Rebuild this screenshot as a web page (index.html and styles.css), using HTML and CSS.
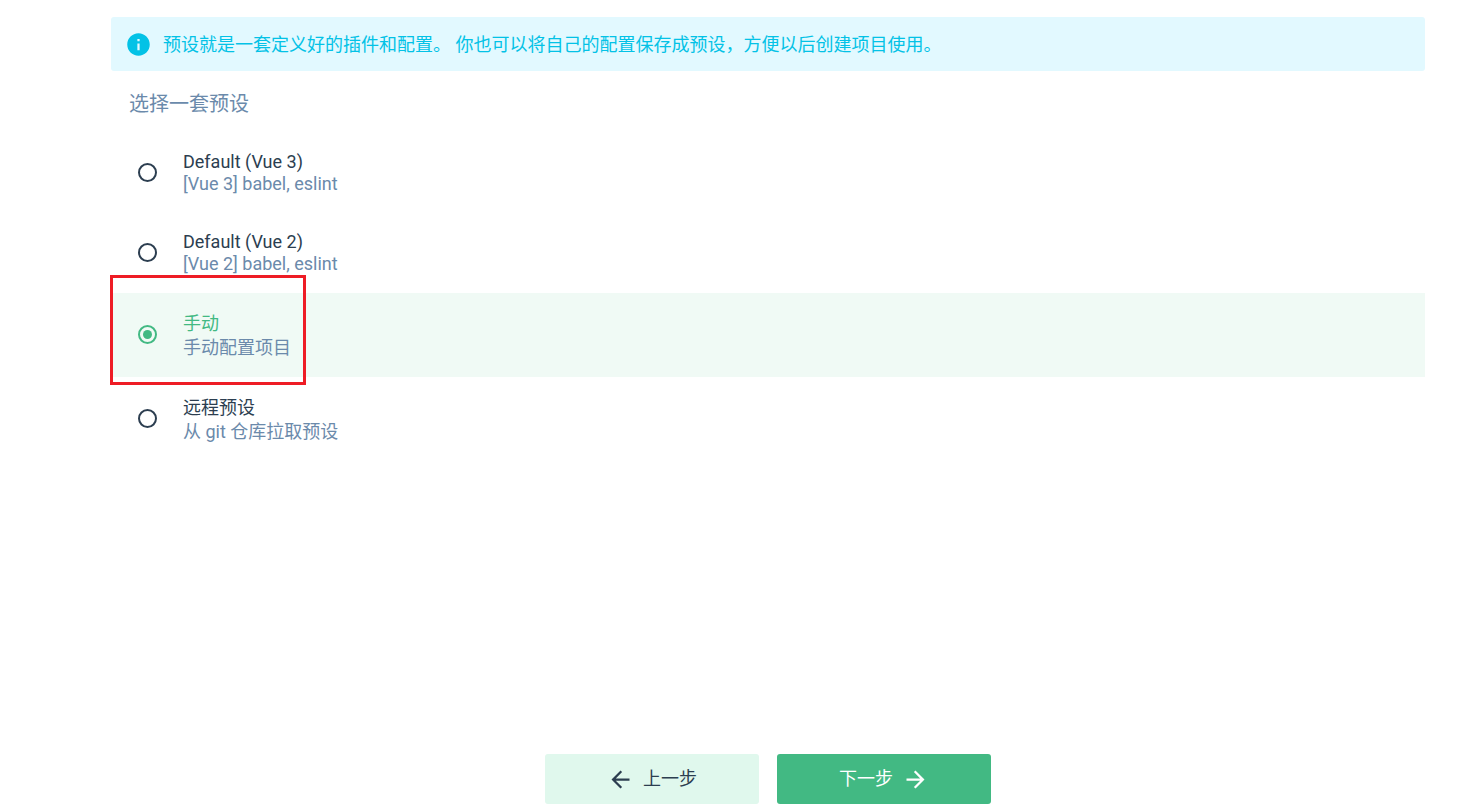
FILE: index.html
```
<!DOCTYPE html>
<html lang="zh-CN">
<head>
<meta charset="utf-8">
<title>创建新项目</title>
<link rel="stylesheet" href="styles.css">
</head>
<body>
<form class="page">
  <p class="info">
    <svg class="info-icon" viewBox="0 0 24 24" aria-hidden="true"><path d="M12 2C6.480 2 2 6.480 2 12s4.480 10 10 10 10-4.480 10-10S17.520 2 12 2zm1 15h-2v-6h2v6zm0-8h-2V7h2v2z"/></svg>
    <span class="info-text">预设就是一套定义好的插件和配置。 你也可以将自己的配置保存成预设，方便以后创建项目使用。</span>
  </p>
  <fieldset class="presets">
    <legend class="title">选择一套预设</legend>
    <label class="preset">
      <input class="radio" type="radio" name="preset">
      <span class="text"><span class="name">Default (Vue 3)</span><span class="desc">[Vue 3] babel, eslint</span></span>
    </label>
    <label class="preset">
      <input class="radio" type="radio" name="preset">
      <span class="text"><span class="name">Default (Vue 2)</span><span class="desc">[Vue 2] babel, eslint</span></span>
    </label>
    <label class="preset cjk selected">
      <input class="radio" type="radio" name="preset" checked>
      <span class="text"><span class="name">手动</span><span class="desc">手动配置项目</span></span>
      <span class="marker"></span>
    </label>
    <label class="preset cjk">
      <input class="radio" type="radio" name="preset">
      <span class="text"><span class="name">远程预设</span><span class="desc">从 git 仓库拉取预设</span></span>
    </label>
  </fieldset>
  <div class="actions">
    <button class="button" type="button">
      <svg class="arrow" viewBox="0 0 24 24" aria-hidden="true"><path d="M20 11H7.830l5.590-5.590L12 4l-8 8 8 8 1.410-1.410L7.830 13H20v-2z"/></svg>
      <span>上一步</span>
    </button>
    <button class="button primary" type="button">
      <span>下一步</span>
      <svg class="arrow" viewBox="0 0 24 24" aria-hidden="true"><path d="M12 4l-1.410 1.410L16.170 11H4v2h12.170l-5.580 5.590L12 20l8-8z"/></svg>
    </button>
  </div>
</form>
</body>
</html>
```
FILE: styles.css
```
* { box-sizing: border-box; }
body {
  margin: 0;
  background: #fff;
  color: #2c3e50;
  font: 18px/22px Roboto, "Noto Sans CJK SC", sans-serif;
}
.page {
  display: flex;
  flex-direction: column;
  min-height: 100vh;
  padding: 17px 49px 5px 111px;
}
.info {
  display: flex;
  align-items: center;
  gap: 11px;
  min-height: 54px;
  margin: 0;
  padding: 0 14px;
  border-radius: 3px;
  background: #e2f9ff;
  color: #03c2e6;
}
.info-icon { width: 27px; height: 27px; fill: currentColor; }
.info-text { padding-top: 2px; }
.presets { min-width: 0; margin: 0; padding: 0; border: 0; }
.title {
  padding: 20px 18px 16px;
  color: #6b8aab;
  font-size: 20px;
  line-height: 26px;
}
.preset {
  position: relative;
  display: flex;
  align-items: center;
  gap: 26px;
  height: 80px;
  padding: 0 27px;
}
.cjk { height: 84px; line-height: 24px; }
.cjk .text { padding-top: 2px; }
.selected { background: #f0faf5; }
.text { display: flex; flex-direction: column; }
.desc { color: #6b8aab; }
.selected .name { color: #42b983; }
.radio {
  display: grid;
  place-items: center;
  appearance: none;
  width: 19px;
  height: 19px;
  margin: 0 0 1px;
  border: 2px solid #2c3e50;
  border-radius: 50%;
}
.radio:checked { border-color: #42b983; }
.radio:checked::before {
  content: "";
  width: 9px;
  height: 9px;
  border-radius: 50%;
  background: #42b983;
}
.marker {
  position: absolute;
  top: -18px;
  left: -1px;
  width: 196px;
  height: 110px;
  border: 3px solid #ee1c25;
}
.actions {
  display: flex;
  justify-content: center;
  gap: 18px;
  margin-top: auto;
}
.button {
  display: flex;
  align-items: center;
  justify-content: center;
  gap: 9px;
  width: 214px;
  height: 50px;
  padding: 0;
  border: 0;
  border-radius: 3px;
  background: #e0f8ed;
  color: #2c3e50;
  font: inherit;
}
.primary { background: #42b983; color: #fff; }
.arrow { width: 27px; height: 27px; fill: currentColor; }
```
